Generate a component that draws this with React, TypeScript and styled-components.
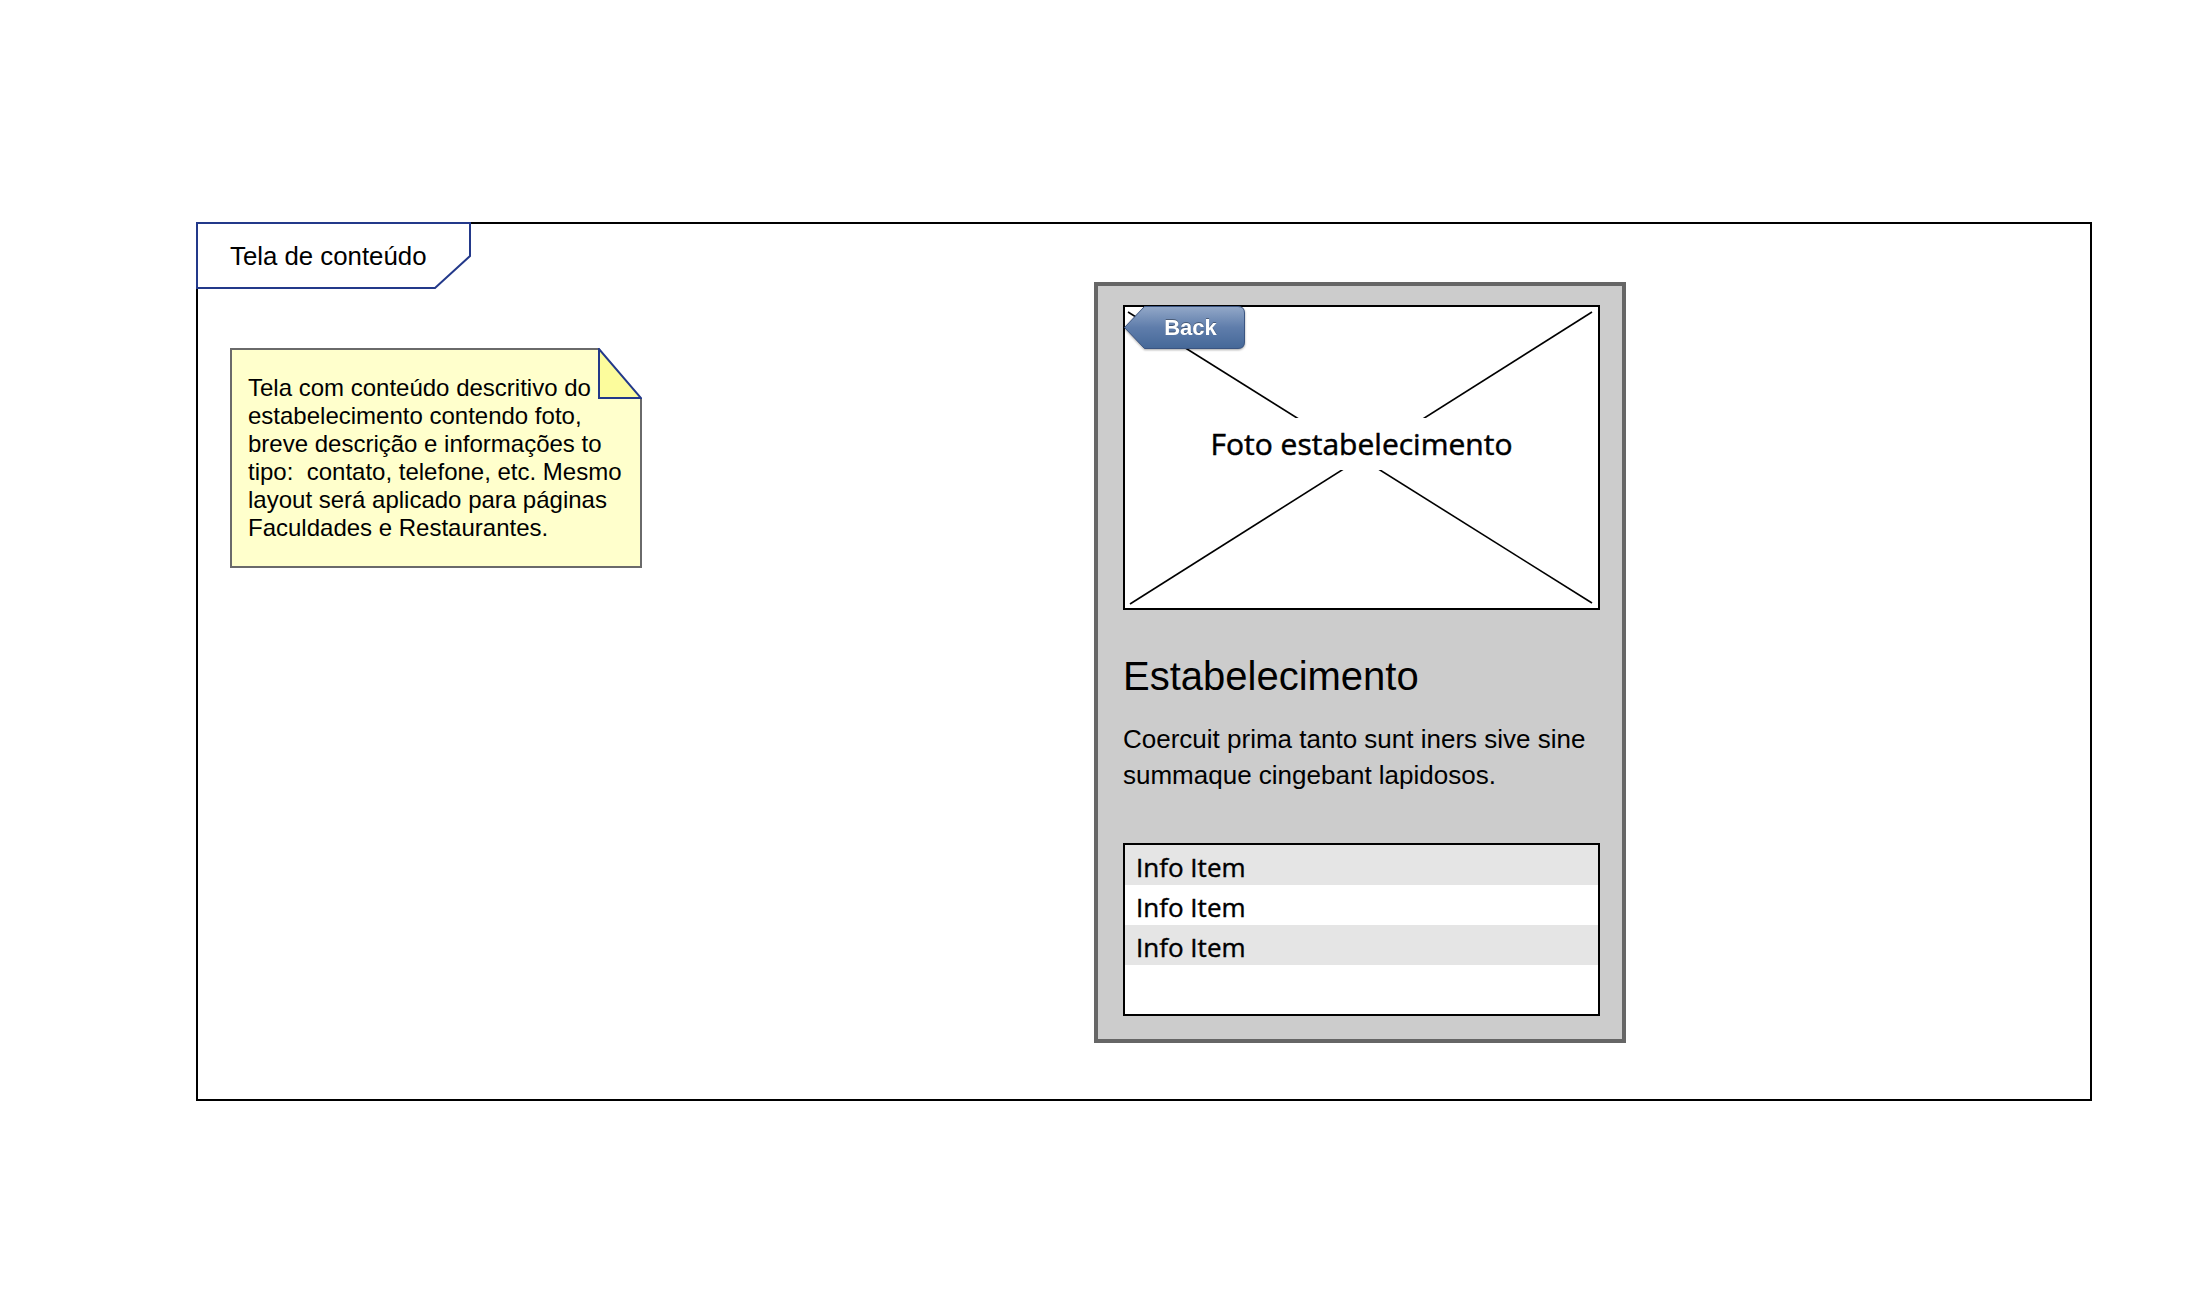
import React from 'react';
import styled, { createGlobalStyle } from 'styled-components';

const GlobalStyle = createGlobalStyle`
    html, body {
        margin: 0;
        padding: 0;
        background: #ffffff;
    }
    body {
        font-family: "Liberation Sans", Arial, sans-serif;
        color: #000000;
    }
`;

const Page = styled.div`
    width: 2212px;
    min-height: 1312px;
    box-sizing: border-box;
    padding: 222px 0 0 196px;
`;

const Frame = styled.div`
    width: 1896px;
    height: 879px;
    box-sizing: border-box;
    border: 2px solid #000000;
    display: flex;
    align-items: flex-start;
`;

const LeftColumn = styled.div`
    width: 896px;
    display: flex;
    flex-direction: column;
    align-items: flex-start;
`;

const Tab = styled.div`
    position: relative;
    width: 275px;
    height: 67px;
    margin: -2px 0 0 -2px;
    display: flex;
    align-items: center;
    padding: 2px 0 0 34px;
    box-sizing: border-box;
    font-size: 25.8px;
    svg {
        position: absolute;
        top: 0;
        left: 0;
    }
    span {
        position: relative;
    }
`;

const Note = styled.div`
    position: relative;
    width: 412px;
    height: 220px;
    margin: 59px 0 0 32px;
    box-sizing: border-box;
    background: #ffffcc;
    border: 2px solid #6a6a6a;
    padding: 24px 8px 0 16px;
    font-size: 24px;
    line-height: 28px;
    white-space: pre-wrap;
`;

const NoteFold = styled.svg`
    position: absolute;
    top: -2px;
    right: -2px;
`;

const Phone = styled.div`
    width: 532px;
    height: 761px;
    margin-top: 58px;
    box-sizing: border-box;
    border: 4px solid #666666;
    background: #cccccc;
    padding: 19px 22px 0 25px;
    display: flex;
    flex-direction: column;
`;

const Photo = styled.div`
    position: relative;
    width: 477px;
    height: 305px;
    box-sizing: border-box;
    border: 2px solid #000000;
    background: #ffffff;
`;

const Cross = styled.svg`
    position: absolute;
    inset: 0;
    width: 100%;
    height: 100%;
`;

const PhotoLabel = styled.div`
    position: absolute;
    top: 111px;
    left: 50%;
    transform: translateX(-50%);
    height: 52px;
    line-height: 52px;
    background: #ffffff;
    white-space: nowrap;
    font-family: "Comic Sans MS", "Open Sans", sans-serif;
    font-size: 30px;
    -webkit-text-stroke: 0.5px #000000;
`;

const BackButton = styled.button`
    position: absolute;
    top: -1px;
    left: -1px;
    width: 121px;
    height: 43px;
    padding: 0 0 0 12px;
    border: none;
    background: transparent;
    display: flex;
    align-items: center;
    justify-content: center;
    font-family: "Liberation Sans", Arial, sans-serif;
    font-weight: bold;
    font-size: 22px;
    color: #ffffff;
    text-shadow: 0 -1px 0 rgba(0, 0, 0, 0.35);
    filter: drop-shadow(0 1px 1px rgba(0, 0, 0, 0.35));
    svg {
        position: absolute;
        top: 0;
        left: 0;
    }
    span {
        position: relative;
    }
`;

const Heading = styled.h2`
    margin: 47px 0 0;
    font-size: 40px;
    line-height: 39px;
    font-weight: normal;
`;

const Text = styled.p`
    margin: 25px 0 0;
    font-size: 26px;
    line-height: 36px;
`;

const InfoList = styled.div`
    margin-top: 50px;
    width: 477px;
    height: 173px;
    box-sizing: border-box;
    border: 2px solid #000000;
    background: #ffffff;
    display: flex;
    flex-direction: column;
`;

const InfoRow = styled.div<{ shaded?: boolean }>`
    height: 40px;
    padding: 3px 0 0 11px;
    box-sizing: border-box;
    display: flex;
    align-items: center;
    background: ${(props) => (props.shaded ? '#e5e5e5' : '#ffffff')};
    font-family: "Comic Sans MS", "Open Sans", sans-serif;
    font-size: 26px;
    -webkit-text-stroke: 0.4px #000000;
`;

const noteText = `Tela com conteúdo descritivo do
estabelecimento contendo foto,
breve descrição e informações to
tipo:  contato, telefone, etc. Mesmo
layout será aplicado para páginas
Faculdades e Restaurantes.`;

const infoItems = ['Info Item', 'Info Item', 'Info Item'];

export default function App() {
    return (
        <>
            <GlobalStyle />
            <Page>
                <Frame>
                    <LeftColumn>
                        <Tab>
                            <svg width="275" height="67" viewBox="0 0 275 67">
                                <polygon
                                    points="1,1 274,1 274,34 239,66 1,66"
                                    fill="#ffffff"
                                    stroke="#23398a"
                                    strokeWidth="2"
                                />
                            </svg>
                            <span>Tela de conteúdo</span>
                        </Tab>
                        <Note>
                            {noteText}
                            <NoteFold width="46" height="52" viewBox="0 0 46 52">
                                <polygon points="3,0 46,0 46,51" fill="#ffffff" />
                                <polygon
                                    points="3,1 3,50 45,50"
                                    fill="#fcfc9c"
                                    stroke="#23398a"
                                    strokeWidth="2"
                                />
                            </NoteFold>
                        </Note>
                    </LeftColumn>
                    <Phone>
                        <Photo>
                            <Cross viewBox="0 0 473 301" preserveAspectRatio="none">
                                <line x1="3" y1="5" x2="467" y2="296" stroke="#000" strokeWidth="1.6" />
                                <line x1="467" y1="5" x2="5" y2="297" stroke="#000" strokeWidth="1.6" />
                            </Cross>
                            <PhotoLabel>Foto estabelecimento</PhotoLabel>
                            <BackButton>
                                <svg width="121" height="43" viewBox="0 0 121 43">
                                    <defs>
                                        <linearGradient id="backFill" x1="0" y1="0" x2="0" y2="1">
                                            <stop offset="0" stopColor="#93a8c8" />
                                            <stop offset="0.5" stopColor="#5f7dab" />
                                            <stop offset="1" stopColor="#456898" />
                                        </linearGradient>
                                    </defs>
                                    <path
                                        d="M20.5 0.5 H114 Q120.5 0.5 120.5 7 V36 Q120.5 42.5 114 42.5 H20.5 L0.5 21.5 Z"
                                        fill="url(#backFill)"
                                        stroke="#3b5581"
                                        strokeWidth="1"
                                    />
                                </svg>
                                <span>Back</span>
                            </BackButton>
                        </Photo>
                        <Heading>Estabelecimento</Heading>
                        <Text>Coercuit prima tanto sunt iners sive sine summaque cingebant lapidosos.</Text>
                        <InfoList>
                            {infoItems.map((item, i) => (
                                <InfoRow key={i} shaded={i % 2 === 0}>
                                    {item}
                                </InfoRow>
                            ))}
                        </InfoList>
                    </Phone>
                </Frame>
            </Page>
        </>
    );
}
